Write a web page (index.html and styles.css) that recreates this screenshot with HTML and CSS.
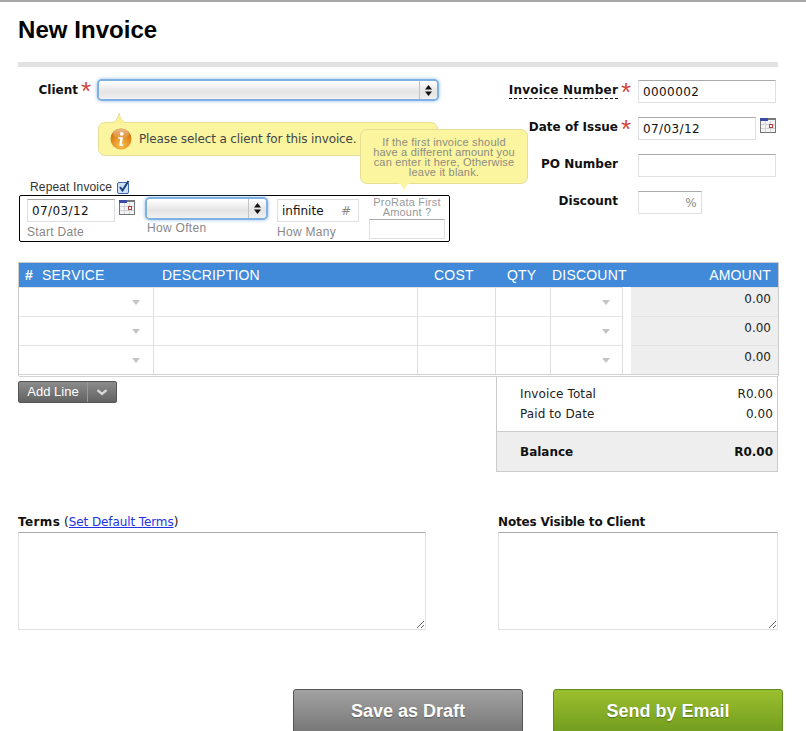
FILE: index.html
```html
<!DOCTYPE html>
<html lang="en">
<head>
    <meta charset="UTF-8">
    <meta name="viewport" content="width=device-width, initial-scale=1.0">
    <title>New Invoice</title>
    <link rel="stylesheet" href="styles.css">
</head>
<body>

<div class="page">
    <h1>New Invoice</h1>

    <form class="invoice-top">
        <div class="top-left">
            <div class="client-row">
                <label class="field-label client-label">Client</label><span class="req">*</span>
                <div class="fake-select client-select"><span class="select-arrows"><svg width="7" height="11" viewBox="0 0 7 11"><path d="M3.5 0L7 4.5H0zM3.5 11L0 6.5h7z" fill="#111"/></svg></span></div>
            </div>

            <div class="tip client-tip">
                <svg class="tip-tail" width="14" height="10" viewBox="0 0 14 10"><path d="M0 10C4 9 6 5 7 0c1 5 3 9 7 10z" fill="#fbf18f"/><path d="M0 9.5C4 8.500 6 5 7 0c1 5 3 8.500 7 9.500" fill="none" stroke="#e8df9a"/></svg>
                <svg class="info-icon" width="22" height="22" viewBox="0 0 22 22">
                    <defs>
                        <radialGradient id="infoFill" cx="50%" cy="80%" r="70%"><stop offset="0" stop-color="#fbbf4a"/><stop offset="1" stop-color="#d2700c"/></radialGradient>
                        <linearGradient id="infoShine" x1="0" y1="0" x2="0" y2="1"><stop offset="0" stop-color="#fff" stop-opacity="0.55"/><stop offset="1" stop-color="#fff" stop-opacity="0"/></linearGradient>
                    </defs>
                    <circle cx="11" cy="11" r="10.500" fill="url(#infoFill)"/>
                    <ellipse cx="11" cy="6" rx="8" ry="5" fill="url(#infoShine)"/>
                    <circle cx="11.800" cy="5.800" r="1.900" fill="#fff"/>
                    <path d="M8.300 9.300h4.700l-1.100 6.600c-.1.700.6.700 1.500.3l-.2 1.200c-1.700 1-4 1.100-3.800-.9l.8-5.800H8.100z" fill="#fff"/>
                </svg>
                <span>Please select a client for this invoice.</span>
            </div>

            <div class="repeat-head">
                <span>Repeat Invoice</span>
                <svg width="13" height="14" viewBox="0 0 13 14"><rect x="0.500" y="2.500" width="11" height="11" rx="1.500" fill="#cfe0f5" stroke="#3f69a8"/><path d="M3 7l2.500 3.500L11.500 1" fill="none" stroke="#17427f" stroke-width="2"/></svg>
            </div>

            <div class="repeat-box">
                <div class="repeat-col col-start">
                    <div class="with-cal">
                        <input class="text-input start-input" type="text" value="07/03/12">
                        <svg class="cal" width="16" height="15" viewBox="0 0 16 15"><rect x="0.500" y="0.500" width="15" height="14" fill="#f4f3f3" stroke="#777"/><path d="M5.500 3v11M10.500 3v11M1 6.500h14M1 10.500h14" stroke="#d2d2d8"/><rect x="0" y="0" width="8" height="3" fill="#3c4aa8"/><rect x="8" y="0" width="8" height="2" fill="#777"/><rect x="9.500" y="6.500" width="3" height="3" fill="#fff" stroke="#b43c3c"/></svg>
                    </div>
                    <span class="hint">Start Date</span>
                </div>
                <div class="repeat-col col-often">
                    <div class="fake-select often-select"><span class="select-arrows"><svg width="7" height="11" viewBox="0 0 7 11"><path d="M3.500 0L7 4.500H0zM3.500 11L0 6.500h7z" fill="#111"/></svg></span></div>
                    <span class="hint">How Often</span>
                </div>
                <div class="repeat-col col-many">
                    <div class="text-input many-input"><span>infinite</span><span class="unit">#</span></div>
                    <span class="hint">How Many</span>
                </div>
                <div class="repeat-col col-prorata">
                    <span class="prorata-label">ProRata First Amount ?</span>
                    <input class="text-input prorata-input" type="text">
                </div>
            </div>

            <div class="tip prorata-tip">
                If the first invoice should have a different amount you can enter it here, Otherwise leave it blank.
                <svg class="tip-tail-down" width="12" height="8" viewBox="0 0 12 8"><path d="M0 0C3 1 5 4 6 8c1-4 3-7 6-8z" fill="#fbf5a0"/></svg>
            </div>
        </div>

        <div class="top-right">
            <label class="field-label"><span class="dotted">Invoice Number</span></label><span class="req">*</span>
            <input class="text-input wide" type="text" value="0000002">

            <label class="field-label">Date of Issue</label><span class="req">*</span>
            <div class="with-cal">
                <input class="text-input issue-input" type="text" value="07/03/12">
                <svg class="cal" width="16" height="15" viewBox="0 0 16 15"><rect x="0.500" y="0.500" width="15" height="14" fill="#f4f3f3" stroke="#777"/><path d="M5.500 3v11M10.500 3v11M1 6.500h14M1 10.500h14" stroke="#d2d2d8"/><rect x="0" y="0" width="8" height="3" fill="#3c4aa8"/><rect x="8" y="0" width="8" height="2" fill="#777"/><rect x="9.500" y="6.500" width="3" height="3" fill="#fff" stroke="#b43c3c"/></svg>
            </div>

            <label class="field-label">PO Number</label><span></span>
            <input class="text-input wide" type="text">

            <label class="field-label">Discount</label><span></span>
            <div class="text-input discount-input"><span class="unit">%</span></div>
        </div>
    </form>

    <table class="lines">
        <colgroup>
            <col class="c-num"><col class="c-service"><col class="c-desc"><col class="c-cost"><col class="c-qty"><col class="c-disc"><col class="c-gap"><col class="c-amount">
        </colgroup>
        <thead>
            <tr>
                <th class="th-num">#</th><th>SERVICE</th><th class="th-desc">DESCRIPTION</th><th class="th-cost">COST</th><th class="th-qty">QTY</th><th class="th-disc" colspan="2">DISCOUNT</th><th class="th-amount">AMOUNT</th>
            </tr>
        </thead>
        <tbody id="lineRows">
            <tr><td colspan="2"><span class="down"></span></td><td></td><td></td><td></td><td><span class="down down-disc"></span></td><td class="gap"></td><td class="amount">0.00</td></tr>
            <tr><td colspan="2"><span class="down"></span></td><td></td><td></td><td></td><td><span class="down down-disc"></span></td><td class="gap"></td><td class="amount">0.00</td></tr>
            <tr><td colspan="2"><span class="down"></span></td><td></td><td></td><td></td><td><span class="down down-disc"></span></td><td class="gap"></td><td class="amount">0.00</td></tr>
        </tbody>
    </table>

    <div class="below-table">
        <div class="add-line">
            <span class="add-text">Add Line</span>
            <span class="add-more"><svg width="12" height="7" viewBox="0 0 12 7"><path d="M1.500 1.200L6 5l4.500-3.800" fill="none" stroke="#d8d8d8" stroke-width="2.400"/></svg></span>
        </div>
        <div class="totals">
            <div class="total-row"><span>Invoice Total</span><span>R0.00</span></div>
            <div class="total-row"><span>Paid to Date</span><span>0.00</span></div>
            <div class="balance"><span>Balance</span><span>R0.00</span></div>
        </div>
    </div>

    <div class="notes">
        <div class="note terms">
            <label><b>Terms</b> (<a href="#">Set Default Terms</a>)</label>
            <textarea></textarea>
        </div>
        <div class="note client-notes">
            <label><b>Notes Visible to Client</b></label>
            <textarea></textarea>
        </div>
    </div>

    <div class="actions">
        <button class="btn btn-draft" type="button">Save as Draft</button>
        <button class="btn btn-send" type="button">Send by Email</button>
    </div>
</div>

</body>
</html>
```

FILE: styles.css
```css
html, body { height: 731px; overflow: hidden; }
body { margin: 0; background: #fff; color: #111; font-family: "DejaVu Sans", Verdana, sans-serif; font-size: 12px; border-top: 2px solid #a8a8a8; }
.page { width: 760px; padding: 0 28px 0 18px; }

h1 { margin: 0; padding-top: 14px; height: 46px; font: bold 24px/28px "Liberation Sans", Arial, sans-serif; letter-spacing: 0.05px; color: #000; border-bottom: 5px solid #e2e2e2; }

.invoice-top { position: relative; display: flex; justify-content: space-between; padding-top: 13px; height: 183px; }
.top-left { width: 440px; }
.field-label { font-weight: bold; text-align: right; color: #111; }
.req { color: #d0453c; font: 26px/14px "Liberation Sans", sans-serif; height: 14px; overflow: visible; }

.client-row { display: flex; align-items: center; height: 20px; }
.client-label { width: 60px; }
.client-row .req { width: 20px; padding-left: 3px; box-sizing: border-box; margin-top: 2px; }

.fake-select { position: relative; height: 18px; border-radius: 3px; background: linear-gradient(#fff, #e4e4e4 60%, #f0f0f0); box-shadow: 0 0 0 2px #7fb0e4, 0 0 3px 3px rgba(127, 176, 228, 0.5); }
.select-arrows { position: absolute; right: 0; top: 0; bottom: 0; width: 17px; display: flex; align-items: center; justify-content: center; border-left: 1px solid #c4c4c4; }
.client-select { width: 338px; margin-left: 1px; }

.tip { position: absolute; background: #fbf5a0; border: 1px solid #e6dd96; border-radius: 7px; color: #444; box-sizing: border-box; }
.client-tip { left: 80px; top: 55px; width: 340px; height: 34px; padding-left: 40px; line-height: 32px; letter-spacing: -0.13px; }
.tip-tail { position: absolute; left: 13px; top: -10px; }
.info-icon { position: absolute; left: 11px; top: 5px; }
.prorata-tip { left: 342px; top: 62px; width: 168px; height: 55px; padding: 7px 8px 0; z-index: 2; text-align: center; color: #8c8c80; font: 11px/10px "Liberation Sans", Arial, sans-serif; letter-spacing: 0.2px; }
.tip-tail-down { position: absolute; left: 37px; bottom: -8px; }

.repeat-head { display: flex; align-items: center; gap: 5px; margin: 80px 0 0 12px; height: 15px; font: 12px/15px "Liberation Sans", Arial, sans-serif; letter-spacing: 0.15px; color: #333; }
.repeat-head svg { margin-top: -2px; }
.repeat-box { display: flex; width: 431px; height: 47px; margin: 0 0 0 1px; box-sizing: border-box; border: 1px solid #000; border-radius: 2px; padding: 3px 0 0 7px; }
.repeat-col { display: flex; flex-direction: column; }
.hint { color: #888; font: 12px/14px "Liberation Sans", Arial, sans-serif; letter-spacing: 0.3px; }
.col-start { width: 120px; }
.col-start .hint { margin-top: 3px; }
.col-often { width: 130px; }
.often-select { width: 119px; margin-bottom: 3px; height: 19px; }
.col-often .hint { margin-top: 0; }
.col-many { width: 92px; }
.col-many .hint { margin-top: 3px; }
.col-prorata { width: 76px; align-items: center; margin-top: -2px; }
.prorata-label { color: #999; text-align: center; width: 72px; font: 11px/10px "Liberation Sans", Arial, sans-serif; letter-spacing: 0.2px; }
.with-cal { display: flex; align-items: flex-start; gap: 4px; }
.cal { margin-top: 1px; flex: none; }

.text-input { box-sizing: border-box; height: 23px; margin: 0; padding: 0 4px; border: 1px solid #dfe0e4; border-top-color: #aaa; border-radius: 0; background: #fff; color: #111; font-family: "DejaVu Sans", Verdana, sans-serif; font-size: 12px; letter-spacing: 0.4px; outline: none; display: block; }
.start-input { width: 88px; }
.many-input { width: 82px; display: flex; justify-content: space-between; align-items: center; border-top-color: #ddd; letter-spacing: 0; padding-right: 7px; }
.prorata-input { width: 76px; height: 20px; margin-top: 2px; }
.unit { color: #888; }

.top-right { display: grid; grid-template-columns: 138px 20px 138px; grid-auto-rows: 23px; row-gap: 14px; align-items: center; width: 296px; margin-right: 2px; }
.top-right .field-label { padding-bottom: 4px; }
.top-right .req { padding-left: 3px; }
.dotted { border-bottom: 1px dashed #111; padding-bottom: 1px; letter-spacing: 0.2px; }
.wide { width: 138px; }
.issue-input { width: 118px; }
.discount-input { width: 64px; display: flex; justify-content: flex-end; align-items: center; }

.lines { width: 759px; margin: 0 0 0 1px; border-collapse: collapse; table-layout: fixed; border-bottom: 3px double #d2d2d2; box-shadow: -1px -1px 0 #ccc, 1px -1px 0 #ccc; }
.c-num { width: 17px; }
.c-service { width: 117px; }
.c-desc { width: 264px; }
.c-cost { width: 78px; }
.c-qty { width: 55px; }
.c-disc { width: 72px; }
.c-gap { width: 9px; }
.c-amount { width: 147px; }
.lines th { height: 24px; padding: 0 0 0 6px; background: #418ad9; color: #fff; text-align: left; font: normal 14px/24px "Liberation Sans", Arial, sans-serif; letter-spacing: 0.2px; white-space: nowrap; overflow: visible; }
.lines th.th-num { font-weight: bold; padding-left: 6px; }
.lines th.th-desc { padding-left: 9px; }
.lines th.th-cost { padding-left: 17px; }
.lines th.th-qty { padding-left: 12px; }
.lines th.th-disc { padding-left: 2px; }
.lines th.th-amount { text-align: right; padding-right: 7px; }
.lines td { height: 28px; padding: 0; border-right: 1px solid #ddd; border-top: 1px solid #e4e4e4; position: relative; }
.lines td.gap { border-right: 0; border-top: 1px solid #fff; }
.lines td.amount { border-right: 0; border-top: 1px solid #e4e4e4; background: #eee; text-align: right; vertical-align: top; padding: 4px 7px 0 0; box-sizing: border-box; color: #222; }
.down { position: absolute; right: 13px; top: 12px; border: 4px solid transparent; border-top: 5px solid #c4c4c4; border-bottom: 0; width: 0; height: 0; }
.down-disc { right: 12px; }

.below-table { display: flex; justify-content: space-between; align-items: flex-start; margin-top: -1px; }
.add-line { display: flex; align-items: stretch; width: 99px; height: 22px; margin-top: 5px; box-sizing: border-box; border: 1px solid #555; border-radius: 2px; background: linear-gradient(#8c8c8c, #626262); color: #fff; font: 13px/19px "Liberation Sans", Arial, sans-serif; }
.add-text { width: 68px; text-align: center; border-right: 1px solid #999; }
.add-more { flex: 1; display: flex; align-items: center; justify-content: center; }
.totals { width: 282px; height: 96px; box-sizing: border-box; border: 1px solid #ccc; border-top: 0; color: #222; display: flex; flex-direction: column; padding-top: 8px; }
.total-row { display: flex; justify-content: space-between; height: 20px; line-height: 20px; padding: 0 4px 0 23px; letter-spacing: 0.1px; }
.balance { display: flex; justify-content: space-between; align-items: center; margin-top: auto; height: 39px; padding: 0 4px 0 23px; background: #eee; border-top: 1px solid #ccc; font-weight: bold; color: #111; }

.notes { display: flex; justify-content: space-between; margin-top: 42px; }
.note label { display: block; height: 18px; line-height: 16px; color: #111; }
.terms b { letter-spacing: 0.4px; }
.client-notes b { letter-spacing: -0.15px; }
.note a { color: #2433e0; letter-spacing: -0.1px; }
.note textarea { display: block; box-sizing: border-box; height: 98px; margin: 0; padding: 4px; border: 1px solid #e2e2e2; border-top-color: #aaa; border-radius: 0; outline: none; }
.terms textarea { width: 408px; }
.client-notes textarea { width: 280px; }

.actions { display: flex; justify-content: flex-end; gap: 30px; margin: 59px -5px 0 0; }
.btn { width: 230px; height: 52px; padding: 0 0 8px; border-radius: 3px; color: #fff; font: bold 18px "Liberation Sans", Arial, sans-serif; text-shadow: 0 1px 1px rgba(0, 0, 0, 0.3); }
.btn-draft { border: 1px solid #555; background: linear-gradient(#a2a2a2, #6f6f6f); }
.btn-send { border: 1px solid #5f8a1f; background: linear-gradient(#9bc02e, #6a961c); }
```
